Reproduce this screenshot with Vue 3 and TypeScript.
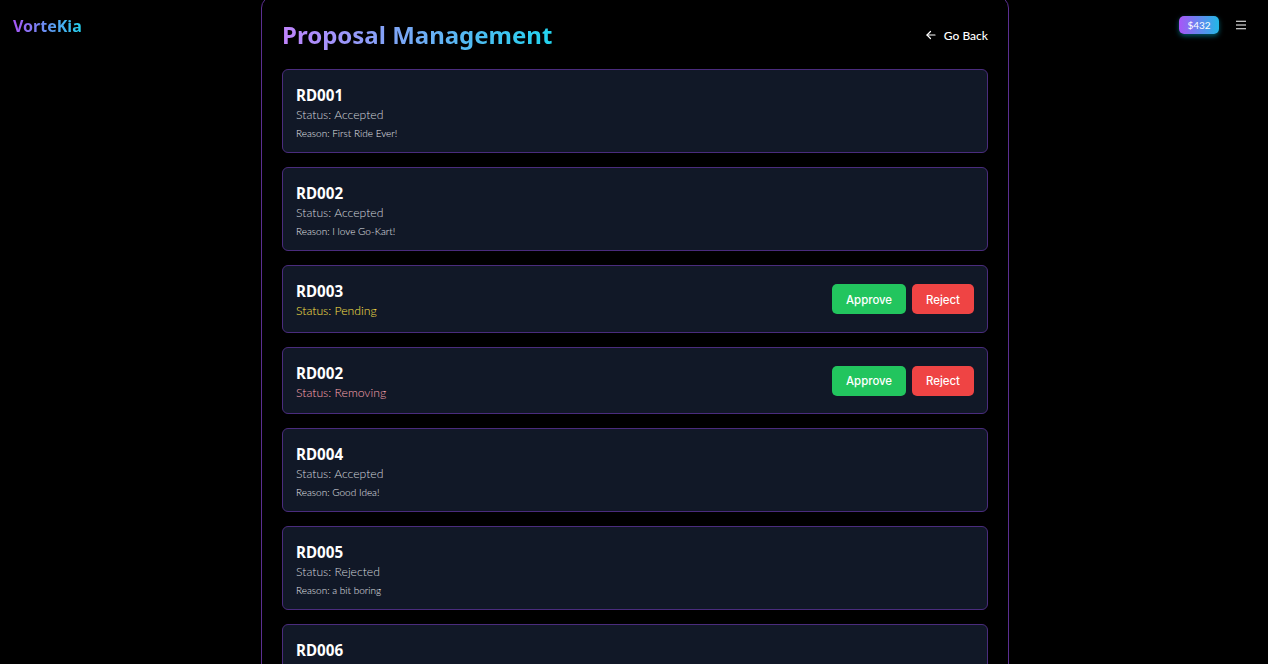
<template>
    <div class="page">
        <div class="brand">VorteKia</div>

        <main class="panel">
            <div class="panel-head">
                <h1>Proposal Management</h1>
                <button class="back" type="button">
                    <svg width="12" height="12" viewBox="0 0 24 24" fill="none" stroke="currentColor" stroke-width="2.4" stroke-linecap="round" stroke-linejoin="round">
                        <path d="M20 12H4" />
                        <path d="M11 5l-7 7 7 7" />
                    </svg>
                    <span>Go Back</span>
                </button>
            </div>

            <div class="list">
                <div v-for="(item, i) in proposals" :key="i" class="card">
                    <div class="info">
                        <h3>{{ item.id }}</h3>
                        <p class="status" :class="item.tone">Status: {{ item.status }}</p>
                        <p v-if="item.reason" class="reason">Reason: {{ item.reason }}</p>
                    </div>
                    <div v-if="!item.reason" class="actions">
                        <button class="approve" type="button">Approve</button>
                        <button class="reject" type="button">Reject</button>
                    </div>
                </div>
            </div>
        </main>

        <div class="tools">
            <span class="balance">$432</span>
            <svg class="menu" width="16" height="16" viewBox="0 0 16 16" fill="none" stroke="#fff" stroke-width="1.1">
                <path d="M3 4.2h10M3 8h10M3 11.8h10" />
            </svg>
        </div>
    </div>
</template>

<script setup lang="ts">
interface Proposal {
    id: string;
    status: string;
    tone: string;
    reason?: string;
}

const proposals: Proposal[] = [
    { id: "RD001", status: "Accepted", tone: "muted", reason: "First Ride Ever!" },
    { id: "RD002", status: "Accepted", tone: "muted", reason: "I love Go-Kart!" },
    { id: "RD003", status: "Pending", tone: "pending" },
    { id: "RD002", status: "Removing", tone: "removing" },
    { id: "RD004", status: "Accepted", tone: "muted", reason: "Good Idea!" },
    { id: "RD005", status: "Rejected", tone: "muted", reason: "a bit boring" },
    { id: "RD006", status: "Accepted", tone: "muted", reason: "Nice" },
];
</script>

<style>
html,
body {
    background: #000;
    overflow: hidden;
}
</style>

<style scoped>
.page {
    display: grid;
    grid-template-columns: 261px 748px 1fr;
    height: 664px;
    overflow: hidden;
    background: #000;
    color: #fff;
    font-family: "Noto Sans", sans-serif;
}

.brand {
    margin: 14px 0 0 13px;
    font-size: 16px;
    line-height: 24px;
    font-weight: 700;
    background: linear-gradient(90deg, #a855f7, #22d3ee);
    background-clip: text;
    -webkit-background-clip: text;
    color: transparent;
    justify-self: start;
    align-self: start;
}

.panel {
    margin-top: -4px;
    padding: 20px 20px 0;
    border: 1px solid #5b2f91;
    border-radius: 12px;
    box-sizing: border-box;
    height: 900px;
}

.panel-head {
    display: flex;
    justify-content: space-between;
    align-items: center;
    height: 36px;
    margin-bottom: 16px;
}

h1 {
    margin: 0;
    font-size: 24px;
    line-height: 32px;
    font-weight: 700;
    background: linear-gradient(90deg, #c084fc, #22d3ee);
    background-clip: text;
    -webkit-background-clip: text;
    color: transparent;
}

.back {
    display: flex;
    align-items: center;
    gap: 7px;
    padding: 0;
    border: none;
    background: none;
    color: #fff;
    font-family: Lato, sans-serif;
    font-size: 12px;
    font-weight: 500;
}

.list {
    display: flex;
    flex-direction: column;
    gap: 14px;
}

.card {
    display: flex;
    justify-content: space-between;
    align-items: center;
    padding: 14px 13px 11px;
    background: #111827;
    border: 1px solid #4a2c7d;
    border-radius: 6px;
}

h3 {
    margin: 0;
    font-size: 15.2px;
    line-height: 22px;
    font-weight: 700;
}

.status {
    margin: 0;
    font-family: Lato, sans-serif;
    font-size: 12.2px;
    line-height: 18.5px;
    font-weight: 300;
}

.muted {
    color: #d1d5db;
}

.pending {
    color: #fde047;
}

.removing {
    color: #fda4af;
}

.reason {
    margin: 0;
    font-family: Lato, sans-serif;
    font-size: 10px;
    line-height: 16.5px;
    font-weight: 300;
    color: #e5e7eb;
}

.actions {
    display: flex;
    gap: 6px;
    margin-bottom: -1px;
    margin-top: -3px;
}

.actions button {
    height: 30px;
    padding: 1px 14px 0;
    border: none;
    border-radius: 5px;
    color: #fff;
    font-family: Inter, sans-serif;
    font-size: 11.4px;
    font-weight: 500;
}

.approve {
    background: #22c55e;
}

.reject {
    background: #ef4444;
}

.tools {
    display: flex;
    justify-content: flex-end;
    align-items: flex-start;
    gap: 14px;
    padding: 16px 19px 0 0;
}

.balance {
    width: 40px;
    height: 18px;
    border-radius: 5px;
    background: linear-gradient(90deg, #a855f7, #22b8e6);
    box-shadow: 0 2px 5px rgba(6, 182, 212, 0.5);
    font-family: Lato, sans-serif;
    font-size: 10px;
    line-height: 18px;
    text-align: center;
}

.menu {
    margin-top: 1px;
}
</style>
